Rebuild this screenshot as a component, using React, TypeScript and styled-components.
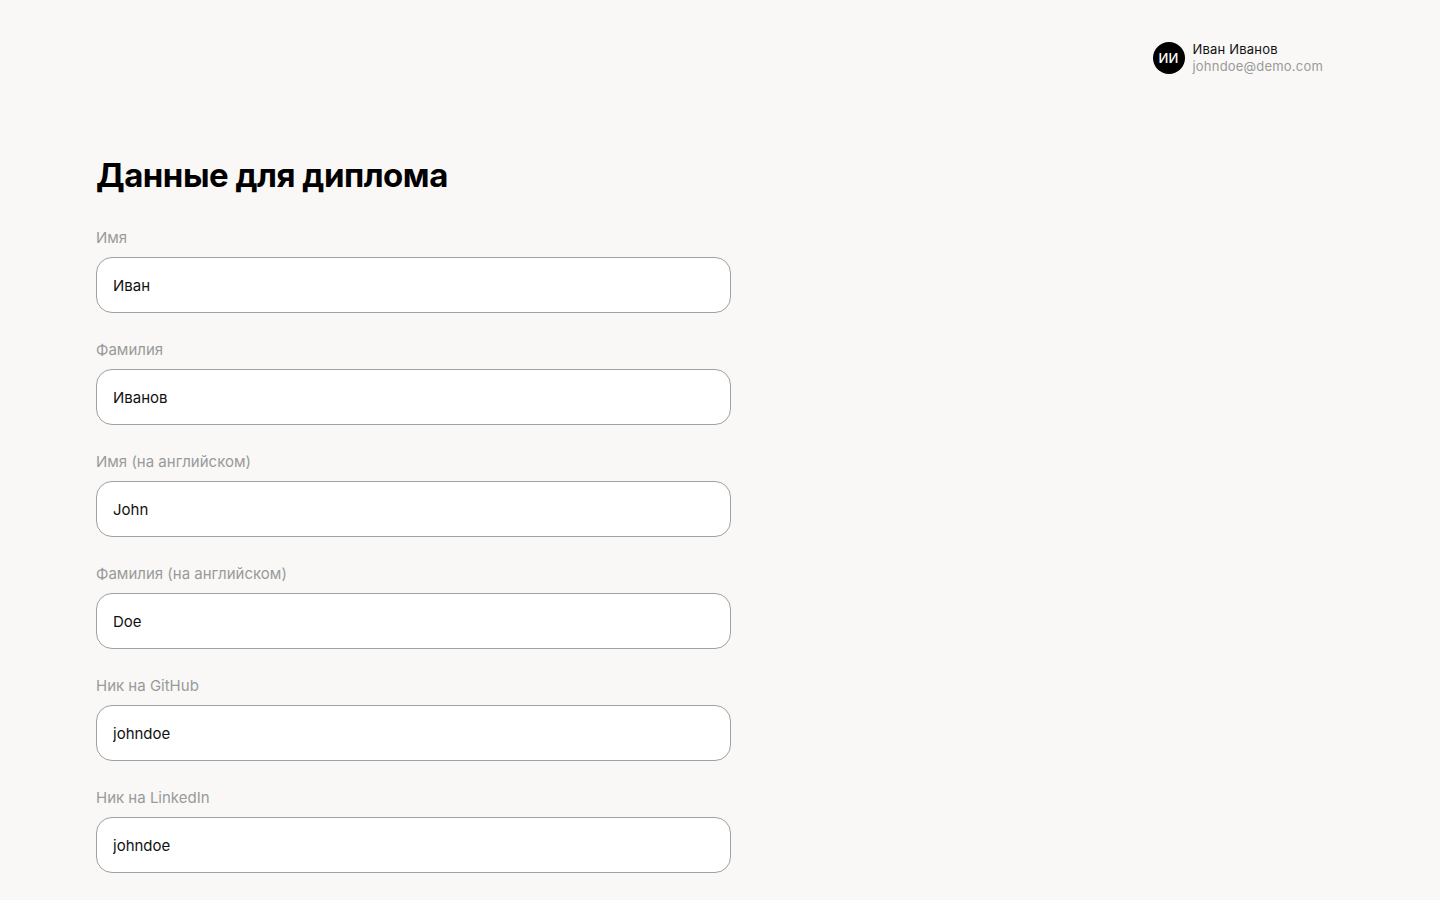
import React from "react";
import styled, { createGlobalStyle } from "styled-components";

const Global = createGlobalStyle`
  html, body { margin: 0; padding: 0; background: #f9f8f6; }
  body { font-family: Inter, "Noto Sans", sans-serif; color: #000; }
  * { box-sizing: border-box; }
`;

const Page = styled.div`
  min-height: 900px;
  background: #f9f8f6;
  display: flex;
  flex-direction: column;
`;

const Header = styled.header`
  display: flex;
  justify-content: flex-end;
  padding: 41px 117px 0 0;
`;

const User = styled.div`
  display: flex;
  align-items: center;
  gap: 8px;
`;

const Avatar = styled.div`
  width: 32px;
  height: 32px;
  border-radius: 50%;
  background: #000;
  color: #fff;
  font-size: 13px;
  font-weight: 500;
  display: flex;
  align-items: center;
  justify-content: center;
  letter-spacing: 0.2px;
`;

const UserInfo = styled.div`
  display: flex;
  flex-direction: column;
  line-height: 17px;
  font-size: 13px;
  letter-spacing: 0.2px;
`;

const UserName = styled.span`
  color: #111;
`;

const UserEmail = styled.span`
  color: #9a9a9a;
`;

const Main = styled.main`
  padding: 78px 0 0 96px;
  width: 731px;
  box-sizing: content-box;
`;

const Title = styled.h1`
  margin: 0 0 30px;
  font-size: 33px;
  line-height: 44px;
  font-weight: 700;
  letter-spacing: -0.5px;
`;

const Form = styled.form`
  display: flex;
  flex-direction: column;
  gap: 26px;
`;

const Field = styled.label`
  display: flex;
  flex-direction: column;
  gap: 9px;
`;

const Label = styled.span`
  font-size: 15px;
  line-height: 21px;
  color: #9a9a9a;
`;

const Input = styled.input`
  width: 635px;
  height: 56px;
  border: 1px solid #a0a0a0;
  border-radius: 16px;
  background: #fff;
  padding: 0 16px;
  font-family: inherit;
  font-size: 15px;
  color: #111;
  outline: none;
`;

const fields = [
  ["Имя", "Иван"],
  ["Фамилия", "Иванов"],
  ["Имя (на английском)", "John"],
  ["Фамилия (на английском)", "Doe"],
  ["Ник на GitHub", "johndoe"],
  ["Ник на LinkedIn", "johndoe"],
];

export default function App() {
  return (
    <Page>
      <Global />
      <Header>
        <User>
          <Avatar>ИИ</Avatar>
          <UserInfo>
            <UserName>Иван Иванов</UserName>
            <UserEmail>johndoe@demo.com</UserEmail>
          </UserInfo>
        </User>
      </Header>
      <Main>
        <Title>Данные для диплома</Title>
        <Form onSubmit={(e) => e.preventDefault()}>
          {fields.map(([l, v]) => (
            <Field key={l}>
              <Label>{l}</Label>
              <Input defaultValue={v} />
            </Field>
          ))}
        </Form>
      </Main>
    </Page>
  );
}
